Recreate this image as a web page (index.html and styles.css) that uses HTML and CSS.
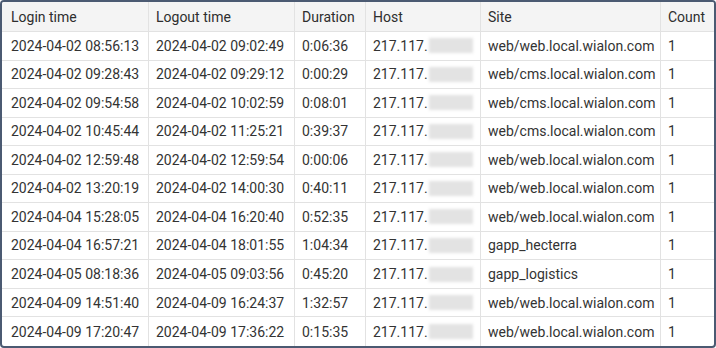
FILE: index.html
```html
<!DOCTYPE html>
<html lang="en">
<head>
<meta charset="utf-8">
<title>Sessions</title>
<link rel="stylesheet" href="styles.css">
</head>
<body>
<div class="frame">
  <div class="grid" role="table">
    <div class="cell head first">Login time</div>
    <div class="cell head">Logout time</div>
    <div class="cell head">Duration</div>
    <div class="cell head">Host</div>
    <div class="cell head">Site</div>
    <div class="cell head last">Count</div>

    <div class="cell first">2024-04-02 08:56:13</div><div class="cell">2024-04-02 09:02:49</div><div class="cell">0:06:36</div><div class="cell">217.117.<span class="blur"></span></div><div class="cell">web/web.local.wialon.com</div><div class="cell last">1</div>
    <div class="cell first">2024-04-02 09:28:43</div><div class="cell">2024-04-02 09:29:12</div><div class="cell">0:00:29</div><div class="cell">217.117.<span class="blur"></span></div><div class="cell">web/cms.local.wialon.com</div><div class="cell last">1</div>
    <div class="cell first">2024-04-02 09:54:58</div><div class="cell">2024-04-02 10:02:59</div><div class="cell">0:08:01</div><div class="cell">217.117.<span class="blur"></span></div><div class="cell">web/cms.local.wialon.com</div><div class="cell last">1</div>
    <div class="cell first">2024-04-02 10:45:44</div><div class="cell">2024-04-02 11:25:21</div><div class="cell">0:39:37</div><div class="cell">217.117.<span class="blur"></span></div><div class="cell">web/cms.local.wialon.com</div><div class="cell last">1</div>
    <div class="cell first">2024-04-02 12:59:48</div><div class="cell">2024-04-02 12:59:54</div><div class="cell">0:00:06</div><div class="cell">217.117.<span class="blur"></span></div><div class="cell">web/web.local.wialon.com</div><div class="cell last">1</div>
    <div class="cell first">2024-04-02 13:20:19</div><div class="cell">2024-04-02 14:00:30</div><div class="cell">0:40:11</div><div class="cell">217.117.<span class="blur"></span></div><div class="cell">web/web.local.wialon.com</div><div class="cell last">1</div>
    <div class="cell first">2024-04-04 15:28:05</div><div class="cell">2024-04-04 16:20:40</div><div class="cell">0:52:35</div><div class="cell">217.117.<span class="blur"></span></div><div class="cell">web/web.local.wialon.com</div><div class="cell last">1</div>
    <div class="cell first">2024-04-04 16:57:21</div><div class="cell">2024-04-04 18:01:55</div><div class="cell">1:04:34</div><div class="cell">217.117.<span class="blur"></span></div><div class="cell">gapp_hecterra</div><div class="cell last">1</div>
    <div class="cell first">2024-04-05 08:18:36</div><div class="cell">2024-04-05 09:03:56</div><div class="cell">0:45:20</div><div class="cell">217.117.<span class="blur"></span></div><div class="cell">gapp_logistics</div><div class="cell last">1</div>
    <div class="cell first">2024-04-09 14:51:40</div><div class="cell">2024-04-09 16:24:37</div><div class="cell">1:32:57</div><div class="cell">217.117.<span class="blur"></span></div><div class="cell">web/web.local.wialon.com</div><div class="cell last">1</div>
    <div class="cell first bottom">2024-04-09 17:20:47</div><div class="cell bottom">2024-04-09 17:36:22</div><div class="cell bottom">0:15:35</div><div class="cell bottom">217.117.<span class="blur"></span></div><div class="cell bottom">web/web.local.wialon.com</div><div class="cell last bottom">1</div>
  </div>
</div>
</body>
</html>
```
FILE: styles.css
```css
html, body {
  margin: 0;
  padding: 0;
  background: #ffffff;
}

.frame {
  width: 716px;
  height: 348px;
  box-sizing: border-box;
  border: 2px solid #4b5a72;
  border-radius: 4px;
  overflow: hidden;
  background: #ffffff;
}

.grid {
  display: grid;
  grid-template-columns: 147px 146px 71px 115px 180px 53px;
  grid-template-rows: 30px repeat(11, 28.545px);
  font-family: Roboto, "Liberation Sans", sans-serif;
  font-size: 14px;
  color: #333333;
}

.cell {
  box-sizing: border-box;
  display: flex;
  align-items: center;
  padding-left: 7px;
  border-right: 1px solid #e2e2e2;
  border-bottom: 1px solid #e2e2e2;
  white-space: nowrap;
  overflow: hidden;
}

.cell.first {
  padding-left: 9px;
}

.cell.last {
  border-right: none;
}

.cell.bottom {
  border-bottom: none;
}

.head {
  background: #f4f4f4;
  color: #2e2e2e;
}

.blur {
  display: inline-block;
  width: 44px;
  height: 15px;
  margin-left: 1px;
  background: #e3e3e3;
  filter: blur(1.5px);
}
```
